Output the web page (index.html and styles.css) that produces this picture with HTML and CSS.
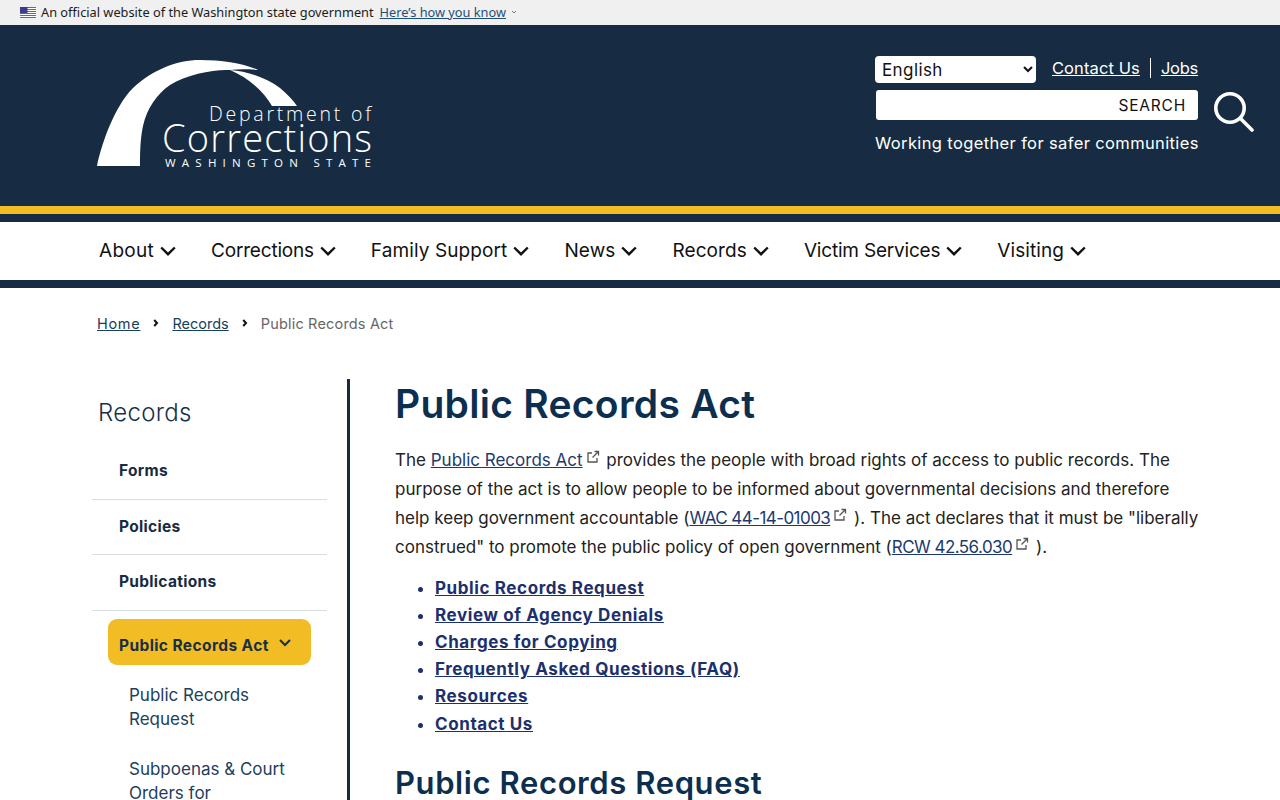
FILE: index.html
```html
<!DOCTYPE html>
<html lang="en">
<head>
<meta charset="utf-8">
<title>Public Records Act</title>
<link rel="stylesheet" href="styles.css">
</head>
<body>
<div class="gov-banner">
  <svg class="flag" viewBox="0 0 16 11" width="16" height="11"><rect width="16" height="11" fill="#fff"/><path d="M0 .5h16M0 2.5h16M0 4.5h16M0 6.5h16M0 8.5h16M0 10.5h16" stroke="#c8443f" stroke-width="1"/><rect width="7.5" height="6" fill="#3c3b8e"/></svg>
  <span class="gov-text">An official website of the Washington state government</span>
  <a class="gov-link" href="#">Here’s how you know </a>
  <svg class="gov-chevron" viewBox="0 0 6 4" width="6" height="4"><path d="M1 1l2 2 2-2" fill="none" stroke="#5d7f9a" stroke-width="1"/></svg>
</div>
<header class="site-header">
  <a class="logo" href="#">
    <svg viewBox="0 0 276 110" width="276" height="110">
      <path fill="#fff" d="M0 106C5 82 18 46 36 28C55 10 80 0 103 0C125 0 146 3 161 10C150 9 142 9 133 10C118 9 90 14 73 25C60 34 50 48 46 66C43 80 43 95 43 106Z"/>
      <path fill="#fff" d="M133 10C150 11 170 18 183 28C190 34 196 40 200 46H175C167 32 152 18 133 10Z"/>
      <text x="112" y="61" class="logo-dept" textLength="162" lengthAdjust="spacing">Department of</text>
      <text x="65" y="92" class="logo-corr" textLength="210" lengthAdjust="spacing">Corrections</text>
      <text x="68" y="107" class="logo-state" textLength="206" lengthAdjust="spacing">WASHINGTON STATE</text>
    </svg>
  </a>
  <div class="header-tools">
    <div class="tools-col">
      <div class="tools-row">
        <select class="lang"><option>English</option></select>
        <nav class="top-links"><a href="#">Contact Us</a><a href="#">Jobs</a></nav>
      </div>
      <div class="search-box"><input class="search-input" type="text" aria-label="Search"><span class="search-label">SEARCH</span></div>
      <p class="tagline">Working together for safer communities</p>
    </div>
    <svg class="search-icon" viewBox="0 0 40 40" width="40" height="40"><circle cx="16" cy="16" r="14.2" fill="none" stroke="#fff" stroke-width="3.6"/><path d="M26.5 26.5L38 38" stroke="#fff" stroke-width="3.6" stroke-linecap="round"/></svg>
  </div>
</header>
<div class="stripe"></div>
<nav class="main-nav">
  <a class="wide" href="#">About<svg viewBox="0 0 16 10" width="16" height="10"><path d="M1.2 1.5L8 8.2l6.8-6.7" fill="none" stroke="#111" stroke-width="2.4"/></svg></a>
  <a class="tight" href="#">Corrections<svg viewBox="0 0 16 10" width="16" height="10"><path d="M1.2 1.5L8 8.2l6.8-6.7" fill="none" stroke="#111" stroke-width="2.4"/></svg></a>
  <a href="#">Family Support<svg viewBox="0 0 16 10" width="16" height="10"><path d="M1.2 1.5L8 8.2l6.8-6.7" fill="none" stroke="#111" stroke-width="2.4"/></svg></a>
  <a href="#">News<svg viewBox="0 0 16 10" width="16" height="10"><path d="M1.2 1.5L8 8.2l6.8-6.7" fill="none" stroke="#111" stroke-width="2.4"/></svg></a>
  <a href="#">Records<svg viewBox="0 0 16 10" width="16" height="10"><path d="M1.2 1.5L8 8.2l6.8-6.7" fill="none" stroke="#111" stroke-width="2.4"/></svg></a>
  <a class="tight" href="#">Victim Services<svg viewBox="0 0 16 10" width="16" height="10"><path d="M1.2 1.5L8 8.2l6.8-6.7" fill="none" stroke="#111" stroke-width="2.4"/></svg></a>
  <a href="#">Visiting<svg viewBox="0 0 16 10" width="16" height="10"><path d="M1.2 1.5L8 8.2l6.8-6.7" fill="none" stroke="#111" stroke-width="2.4"/></svg></a>
</nav>
<ol class="crumbs">
  <li class="home"><a href="#">Home</a></li>
  <li class="sep"><svg viewBox="0 0 6 8" width="6" height="8"><path d="M1.2 1l2.8 3-2.8 3" fill="none" stroke="#111" stroke-width="2"/></svg></li>
  <li class="mid"><a href="#">Records</a></li>
  <li class="sep"><svg viewBox="0 0 6 8" width="6" height="8"><path d="M1.2 1l2.8 3-2.8 3" fill="none" stroke="#111" stroke-width="2"/></svg></li>
  <li class="current">Public Records Act</li>
</ol>
<div class="layout">
  <aside class="side">
    <h2 class="side-title">Records</h2>
    <ul class="side-list">
      <li><a href="#">Forms</a></li>
      <li><a href="#">Policies</a></li>
      <li><a href="#">Publications</a></li>
    </ul>
    <a class="side-active" href="#"><span>Public Records Act</span><svg viewBox="0 0 12 8" width="12" height="8"><path d="M1 1l5 5 5-5" fill="none" stroke="#182f45" stroke-width="2"/></svg></a>
    <ul class="side-sub">
      <li><a href="#">Public Records Request</a></li>
      <li><a href="#">Subpoenas &amp; Court Orders for</a></li>
    </ul>
  </aside>
  <main class="content">
    <h1>Public Records Act</h1>
    <p class="intro">The <a href="#">Public Records Act</a><svg class="ext" viewBox="0 0 14 14" width="14" height="14"><path d="M6 3H2v9h9V8" fill="none" stroke="#555" stroke-width="1.3"/><path d="M6.5 7.5L12 2M8.5 1.5h4v4" fill="none" stroke="#555" stroke-width="1.3"/></svg> provides the people with broad rights of access to public records. The purpose of the act is to allow people to be informed about governmental decisions and therefore help keep government accountable (<a class="code" href="#">WAC 44-14-01003</a><svg class="ext" viewBox="0 0 14 14" width="14" height="14"><path d="M6 3H2v9h9V8" fill="none" stroke="#555" stroke-width="1.3"/><path d="M6.5 7.5L12 2M8.5 1.5h4v4" fill="none" stroke="#555" stroke-width="1.3"/></svg> ). The act declares that it must be "liberally construed" to promote the public policy of open government (<a class="code" href="#">RCW 42.56.030</a><svg class="ext" viewBox="0 0 14 14" width="14" height="14"><path d="M6 3H2v9h9V8" fill="none" stroke="#555" stroke-width="1.3"/><path d="M6.5 7.5L12 2M8.5 1.5h4v4" fill="none" stroke="#555" stroke-width="1.3"/></svg> ).</p>
    <ul class="jump">
      <li><a href="#">Public Records Request</a></li>
      <li><a href="#">Review of Agency Denials</a></li>
      <li><a href="#">Charges for Copying</a></li>
      <li><a href="#">Frequently Asked Questions (FAQ)</a></li>
      <li><a href="#">Resources</a></li>
      <li class="last"><a href="#">Contact Us</a></li>
    </ul>
    <h2 class="section">Public Records Request</h2>
  </main>
</div>
</body>
</html>
```
FILE: styles.css
```css
* { box-sizing: border-box; }
html, body { margin: 0; height: 800px; overflow: hidden; }
body { font-family: Inter, "Noto Sans", sans-serif; color: #222; background: #fff; }
a { color: inherit; }

.gov-banner { height: 25px; background: #f0f0f0; display: flex; align-items: center; padding: 0 0 1px 20px; font-family: "Noto Sans", "Liberation Sans", sans-serif; font-size: 12.77px; color: #1b1b1b; }
.flag { margin-right: 5px; }
.gov-link { margin-left: 6px; color: #1f4e79; }
.gov-chevron { margin-left: 5px; }

.site-header { height: 181px; background: #172c42; display: flex; justify-content: space-between; padding: 31px 26px 0 97px; color: #fff; }
.logo { display: block; margin-top: 4px; height: 110px; }
.logo-dept { font: 300 19.5px "Open Sans", sans-serif; fill: #fff; }
.logo-corr { font: 300 38px "Open Sans", sans-serif; fill: #fff; }
.logo-state { font: 400 11.5px "Open Sans", sans-serif; fill: #fff; }

.header-tools { display: flex; gap: 16px; align-items: flex-start; }
.tools-col { width: 323px; }
.tools-row { display: flex; align-items: center; justify-content: space-between; height: 27px; }
.lang { width: 161px; height: 27px; border: 0; border-radius: 4px; background-color: #fff; color: #111; font: 17px Inter, sans-serif; letter-spacing: .4px; padding-left: 3px; }
.top-links { display: flex; align-items: center; height: 24px; font-size: 16.5px; margin-bottom: 3px; }
.top-links a { color: #fff; padding-right: 10px; letter-spacing: .1px; }
.top-links a + a { border-left: 1px solid #fff; padding: 0 0 0 10px; letter-spacing: -.25px; }
.search-box { display: flex; align-items: center; height: 30px; margin: 7px 0 0 1px; background: #fff; border-radius: 3px; padding-right: 12px; }
.search-input { flex: 1; min-width: 0; border: 0; background: none; outline: 0; }
.search-label { color: #111; font-size: 15.5px; letter-spacing: .8px; }
.tagline { margin: 12px 0 0; font-size: 16.5px; line-height: 22px; letter-spacing: .37px; white-space: nowrap; }
.search-icon { margin-top: 36px; }

.stripe { height: 16px; background: linear-gradient(#f2bc25 8px, #172c42 8px); }
.main-nav { height: 66px; border-bottom: 8px solid #172c42; display: flex; align-items: center; gap: 35px; padding: 0 0 1px 99px; font-size: 19px; }
.main-nav a { display: flex; align-items: center; gap: 6px; color: #111; text-decoration: none; letter-spacing: .1px; }
.main-nav a.tight { letter-spacing: -.2px; }
.main-nav a.wide { letter-spacing: .3px; }

.crumbs { list-style: none; margin: 0; padding: 0 0 0 97px; display: flex; align-items: center; gap: 13px; height: 70px; font-size: 14.5px; letter-spacing: .18px; }
.crumbs a { color: #17405f; }
.crumbs .home a { letter-spacing: .7px; }
.crumbs .mid a { letter-spacing: 0; }
.crumbs .sep { display: flex; }
.crumbs .current { color: #666; }

.layout { display: flex; margin: 21px 0 0 92px; }
.side { width: 258px; height: 500px; border-right: 3px solid #172c42; padding-right: 20px; color: #172c42; }
.side-title { margin: 0; padding: 20px 0 0 6px; font-size: 24px; font-weight: 300; line-height: 28px; letter-spacing: .3px; color: #17304a; }
.side-list { list-style: none; margin: 17px 0 0; padding: 0; }
.side-list li { height: 55.5px; display: flex; align-items: center; padding: 0 0 1px 27px; border-bottom: 1px solid #d8dde0; font-weight: 700; font-size: 15.5px; letter-spacing: .3px; }
.side-list a { text-decoration: none; }
.side-active { display: flex; align-items: center; gap: 10px; height: 46px; margin: 8px 16px 0; padding: 0 0 0 11px; border-radius: 9px; background: #f2bc25; font-weight: 700; font-size: 15.5px; letter-spacing: .4px; text-decoration: none; color: #182f45; white-space: nowrap; }
.side-active span { margin-top: 8px; }
.side-active svg { margin-top: 2px; }
.side-sub { list-style: none; margin: 0; padding: 18px 20px 0 37px; font-size: 17px; line-height: 24px; color: #22405c; }
.side-sub li { margin-bottom: 26px; }
.side-sub a { text-decoration: none; }

.content { width: 803px; margin-left: 45px; }
h1 { margin: 0; font-size: 39px; line-height: 50px; font-weight: 600; letter-spacing: .28px; color: #0d2f4f; }
.intro { margin: 17px -7px 0 0; font-size: 17px; line-height: 29px; color: #222; }
.intro a { color: #1c3a6e; }
.intro a.code { letter-spacing: -.56px; }
.ext { margin: 0 2px 0 3px; vertical-align: 2px; }
.jump { margin: 13px 0 0; padding: 0 0 0 40px; font-size: 17px; line-height: 27px; font-weight: 700; letter-spacing: .6px; color: #1c2f6e; }
.jump .last { margin-top: 1px; }
.section { margin: 25px 0 0; font-size: 31px; line-height: 40px; font-weight: 600; letter-spacing: .6px; color: #0d2f4f; }
```
